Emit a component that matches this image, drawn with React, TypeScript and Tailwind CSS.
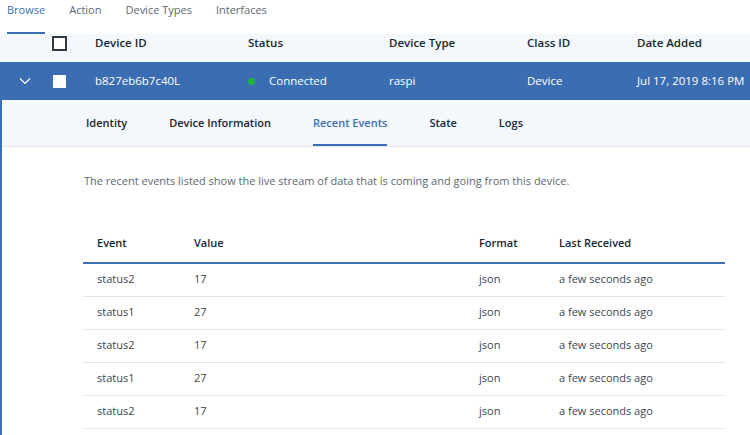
import { useState } from "react";

const events = [
  { event: "status2", value: "17", format: "json", last: "a few seconds ago" },
  { event: "status1", value: "27", format: "json", last: "a few seconds ago" },
  { event: "status2", value: "17", format: "json", last: "a few seconds ago" },
  { event: "status1", value: "27", format: "json", last: "a few seconds ago" },
  { event: "status2", value: "17", format: "json", last: "a few seconds ago" },
];

const topTabs = ["Browse", "Action", "Device Types", "Interfaces"];
const subTabs = ["Identity", "Device Information", "Recent Events", "State", "Logs"];

export default function App() {
  const [tab, setTab] = useState("Browse");
  const [subTab, setSubTab] = useState("Recent Events");

  return (
    <div className="w-[750px] h-[435px] overflow-hidden bg-white text-[#152935] font-['Open_Sans',sans-serif]">
      {/* top nav */}
      <nav className="flex gap-6 pl-[7px] h-[34px]">
        {topTabs.map((t) => (
          <button
            key={t}
            onClick={() => setTab(t)}
            className={`flex flex-col justify-between text-[11px] leading-[15px] pt-[2px] border-b-2 ${
              tab === t ? "text-[#3d70b2] border-[#3d70b2]" : "text-[#5a6872] border-transparent"
            }`}
          >
            {t}
          </button>
        ))}
      </nav>

      {/* device table header */}
      <div className="grid grid-cols-[45px_50px_153px_141px_138px_110px_1fr] items-start pt-[1px] h-[28px] bg-[#f4f7fb] text-[11.5px] leading-[15px] font-semibold">
        <div />
        <div className="flex pl-[7px] pt-[1px]">
          <span className="w-[15px] h-[15px] border-2 border-[#2d3a44] bg-white" />
        </div>
        <div>Device ID</div>
        <div>Status</div>
        <div>Device Type</div>
        <div>Class ID</div>
        <div>Date Added</div>
      </div>

      {/* selected row */}
      <div className="grid grid-cols-[45px_50px_153px_141px_138px_110px_1fr] items-center h-[38px] bg-[#3b6db3] text-white text-[11.5px] whitespace-nowrap">
        <div className="flex pl-[19px]">
          <svg width="12" height="8" viewBox="0 0 12 8" fill="none" stroke="white" strokeWidth="1.2">
            <path d="M1 1.5l5 5 5-5" />
          </svg>
        </div>
        <div className="flex pl-[8px]">
          <span className="w-[13px] h-[13px] bg-white" />
        </div>
        <div>b827eb6b7c40L</div>
        <div className="flex items-center gap-[14px]">
          <span className="w-[7px] h-[7px] rounded-full bg-[#1fb53e]" />
          Connected
        </div>
        <div>raspi</div>
        <div>Device</div>
        <div>Jul 17, 2019 8:16 PM</div>
      </div>

      {/* expanded panel */}
      <div className="border-l-2 border-[#3d70b2] h-full">
        <div className="flex gap-[42px] pl-[84px] h-[47px] bg-[#f4f7fb] border-b border-[#e4e8ec] text-[11px] font-semibold">
          {subTabs.map((t) => (
            <button
              key={t}
              onClick={() => setSubTab(t)}
              className={`h-full pt-[2px] border-b-2 -mb-px ${
                subTab === t ? "text-[#3d70b2] border-[#3d70b2]" : "text-[#152935] border-transparent"
              }`}
            >
              {t}
            </button>
          ))}
        </div>

        <p className="pl-[82px] pt-[26px] text-[11px] text-[#5a6872]">
          The recent events listed show the live stream of data that is coming and going from this device.
        </p>

        <div className="ml-[81px] w-[642px] mt-[36px] text-[11px]">
          <div className="grid grid-cols-[97px_285px_80px_1fr] items-center h-[38px] font-semibold border-b-2 border-[#3d70b2]">
            <div className="pl-[14px]">Event</div>
            <div className="pl-[14px]">Value</div>
            <div className="pl-[14px]">Format</div>
            <div className="pl-[14px]">Last Received</div>
          </div>
          {events.map((e, i) => (
            <div
              key={i}
              className="grid grid-cols-[97px_285px_80px_1fr] items-center h-[33px] border-b border-[#e0e4e8] text-[#3a4650]"
            >
              <div className="pl-[14px]">{e.event}</div>
              <div className="pl-[14px]">{e.value}</div>
              <div className="pl-[14px]">{e.format}</div>
              <div className="pl-[14px]">{e.last}</div>
            </div>
          ))}
        </div>
      </div>
    </div>
  );
}
